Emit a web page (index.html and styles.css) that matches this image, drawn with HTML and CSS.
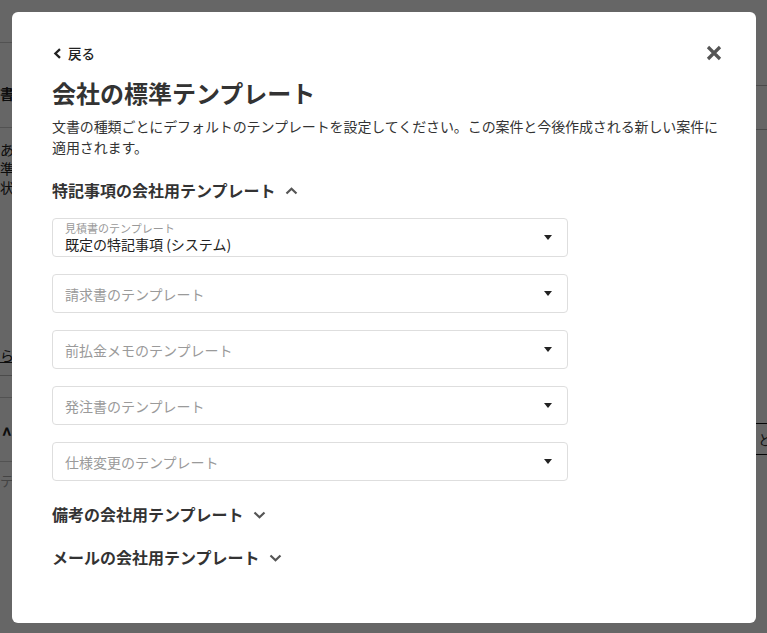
FILE: index.html
```html
<!DOCTYPE html>
<html lang="ja">
<head>
<meta charset="utf-8">
<title>会社の標準テンプレート</title>
<link rel="stylesheet" href="styles.css">
</head>
<body>
  <!-- page underneath the dialog -->
  <div class="page">
    <div class="page-left">
      <div class="pl-gap1"></div>
      <div class="pl-title">書事項</div>
      <div class="pl-text">
        <div>ありに</div>
        <div>準備の</div>
        <div>状況の</div>
      </div>
      <div class="pl-link">らし</div>
      <div class="pl-rule"></div>
      <div class="pl-caret">^</div>
      <div class="pl-rule2"></div>
      <div class="pl-faint">テス</div>
    </div>
    <div class="page-mid"></div>
    <div class="page-right">
      <div class="pr-rule r1"></div>
      <div class="pr-rule r2"></div>
      <div class="pr-box">と</div>
    </div>
  </div>

  <div class="overlay"></div>

  <div class="modal" role="dialog">
    <div class="modal-top">
      <a class="back" href="#">
        <svg class="back-icon" width="9" height="11" viewBox="0 0 9 11"><path d="M7 1.2 L2.4 5.5 L7 9.8" fill="none" stroke="#222" stroke-width="2.3" stroke-linejoin="miter"/></svg>
        <span>戻る</span>
      </a>
      <button class="close" aria-label="閉じる">
        <svg width="16" height="16" viewBox="0 0 16 16"><path d="M2 2 L14 14 M14 2 L2 14" stroke="#555" stroke-width="3.2"/></svg>
      </button>
    </div>

    <h1 class="title">会社の標準テンプレート</h1>
    <p class="desc">文書の種類ごとにデフォルトのテンプレートを設定してください。この案件と今後作成される新しい案件に適用されます。</p>

    <div class="section">
      <div class="section-head">
        <span>特記事項の会社用テンプレート</span>
        <svg class="chev" width="13" height="8" viewBox="0 0 13 8"><path d="M1.5 6.5 L6.5 1.8 L11.5 6.5" fill="none" stroke="#555" stroke-width="2.2"/></svg>
      </div>
      <div class="fields">
        <div class="select filled">
          <div class="select-body">
            <div class="select-label">見積書のテンプレート</div>
            <div class="select-value">既定の特記事項 (システム)</div>
          </div>
          <span class="caret"></span>
        </div>
        <div class="select">
          <div class="select-body"><div class="placeholder">請求書のテンプレート</div></div>
          <span class="caret"></span>
        </div>
        <div class="select">
          <div class="select-body"><div class="placeholder">前払金メモのテンプレート</div></div>
          <span class="caret"></span>
        </div>
        <div class="select">
          <div class="select-body"><div class="placeholder">発注書のテンプレート</div></div>
          <span class="caret"></span>
        </div>
        <div class="select">
          <div class="select-body"><div class="placeholder">仕様変更のテンプレート</div></div>
          <span class="caret"></span>
        </div>
      </div>
    </div>

    <div class="section collapsed first-collapsed">
      <div class="section-head">
        <span>備考の会社用テンプレート</span>
        <svg class="chev" width="13" height="8" viewBox="0 0 13 8"><path d="M1.5 1.5 L6.5 6.2 L11.5 1.5" fill="none" stroke="#555" stroke-width="2.2"/></svg>
      </div>
    </div>

    <div class="section collapsed">
      <div class="section-head">
        <span>メールの会社用テンプレート</span>
        <svg class="chev" width="13" height="8" viewBox="0 0 13 8"><path d="M1.5 1.5 L6.5 6.2 L11.5 1.5" fill="none" stroke="#555" stroke-width="2.2"/></svg>
      </div>
    </div>
  </div>
</body>
</html>
```

FILE: styles.css
```css
* { box-sizing: border-box; }

html, body {
  margin: 0;
  height: 100%;
}

body {
  font-family: "Noto Sans CJK JP", "Noto Sans", sans-serif;
  color: #333;
  background: #fff;
  overflow: hidden;
}

/* ---------- underlying page ---------- */
.page {
  display: grid;
  grid-template-columns: 12px 1fr 11px;
  height: 100vh;
}

.page-left {
  overflow: hidden;
  direction: rtl;
  font-size: 14px;
  color: #222;
}

.page-left > div { direction: ltr; white-space: nowrap; }

.pl-gap1 {
  height: 43px;
  border-bottom: 1px solid #ccc;
}

.pl-title {
  height: 85px;
  padding-top: 40px;
  font-weight: 700;
  border-bottom: 1px solid #ccc;
  text-align: right;
}

.pl-text {
  padding-top: 12px;
  line-height: 19px;
  text-align: right;
}

.pl-text div { text-align: right; }

.pl-link {
  margin-top: 148px;
  text-align: right;
  text-decoration: underline;
  height: 30px;
}

.pl-rule {
  height: 22px;
  border-top: 1px solid #bbb;
}

.pl-caret {
  border-top: 1px solid #ccc;
  height: 65px;
  padding-top: 22px;
  font-weight: 700;
  font-size: 18px;
  text-align: right;
  border-bottom: 1px solid #ccc;
}

.pl-rule2 { height: 8px; }

.pl-faint {
  color: #aaa;
  text-align: right;
}

.page-right {
  overflow: hidden;
}

.pr-rule {
  border-bottom: 1px solid #bbb;
}

.pr-rule.r1 { height: 86px; }
.pr-rule.r2 { height: 44px; }

.pr-box {
  margin-top: 293px;
  height: 32px;
  border-top: 1px solid #111;
  border-bottom: 1px solid #111;
  font-size: 14px;
  line-height: 30px;
  padding-left: 2px;
}

.overlay {
  position: fixed;
  inset: 0;
  background: rgba(0, 0, 0, 0.6);
}

/* ---------- dialog ---------- */
.modal {
  position: fixed;
  left: 12px;
  top: 12px;
  width: 744px;
  height: 611px;
  background: #fff;
  border-radius: 6px;
  padding: 32px 34px 0 40px;
  display: flex;
  flex-direction: column;
}

.modal-top {
  display: flex;
  justify-content: space-between;
  align-items: center;
  height: 18px;
}

.back {
  display: flex;
  align-items: center;
  gap: 6px;
  color: #222;
  text-decoration: none;
  font-size: 13.5px;
  font-weight: 500;
  line-height: 18px;
  margin-left: 1px;
}

.back-icon { display: block; }

.close {
  border: 0;
  background: none;
  padding: 0;
  margin-right: 0;
  margin-top: 0;
  display: flex;
  cursor: pointer;
}

.title {
  margin: 15px 0 0 0;
  font-size: 24px;
  font-weight: 700;
  line-height: 32px;
  color: #333;
  letter-spacing: 0;
}

.desc {
  margin: 7px 0 0 0;
  font-size: 14px;
  letter-spacing: -0.1px;
  line-height: 21px;
  color: #333;
}

.section-head {
  display: flex;
  align-items: center;
  gap: 9px;
  font-size: 16px;
  font-weight: 700;
  line-height: 24px;
  color: #333;
}

.chev { display: block; margin-top: 1px; }

.section { margin-top: 20px; }
.section.first-collapsed { margin-top: 21px; }
.section.collapsed + .section.collapsed { margin-top: 19px; }

.fields {
  margin-top: 16px;
  display: flex;
  flex-direction: column;
  gap: 17px;
  width: 516px;
}

.select {
  height: 39px;
  border: 1px solid #dedede;
  border-radius: 4px;
  display: flex;
  align-items: center;
  padding: 0 15px 0 12px;
}

.select-body { flex: 1; }

.placeholder {
  font-size: 14px;
  color: #9a9a9a;
  line-height: 20px;
}

.select-label {
  font-size: 11px;
  line-height: 14px;
  color: #999;
  margin-top: -1px;
}

.select-value {
  font-size: 14px;
  line-height: 18px;
  color: #222;
}

.caret {
  width: 0;
  height: 0;
  border-left: 4.5px solid transparent;
  border-right: 4.5px solid transparent;
  border-top: 5px solid #222;
}
```
